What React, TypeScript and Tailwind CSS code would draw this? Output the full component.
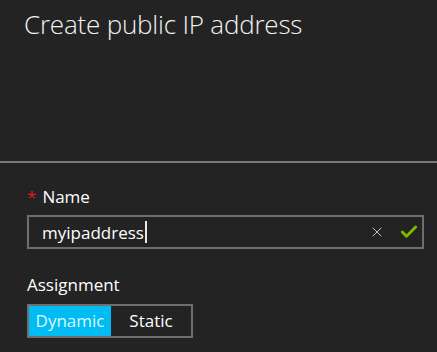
import { X, Check } from "lucide-react";

export default function App() {
  return (
    <main
      className="h-[352px] w-[437px] overflow-hidden bg-[#232323] text-white"
      style={{ fontFamily: '"Open Sans", "Noto Sans", sans-serif' }}
    >
      <header className="h-[163px] border-b-2 border-[#787878] px-6 pt-[6px]">
        <h1 className="text-[26px] font-light leading-9 tracking-[-0.2px] text-[#f2f2f2]">
          Create public IP address
        </h1>
      </header>

      <section className="px-[27px] pt-[22px]">
        <label className="flex items-center gap-[6px] text-[17px] leading-6">
          <span className="text-[#e81123]">*</span>
          <span>Name</span>
        </label>

        <div className="mt-[6px] flex h-[34px] w-[397px] items-center border-2 border-[#6e6e6e] pl-[13px] pr-[3px]">
          <span className="text-[17px] leading-none text-white">myipaddress</span>
          <span className="ml-[1px] h-[22px] w-[2px] bg-[#e6e6e6]" />
          <span className="flex-1" />
          <X className="size-[16px] text-[#cfcfcf]" strokeWidth={1.4} />
          <Check className="ml-[14px] size-[20px] text-[#7fba00]" strokeWidth={3.5} />
        </div>

        <p className="mt-[24px] text-[17px] leading-6">Assignment</p>

        <div className="mt-[7px] flex h-[34px] w-[166px] border-2 border-[#6e6e6e]">
          <button className="flex w-[82px] items-center justify-center bg-[#00bcf2] text-[17px] text-[#dff6ff]">
            Dynamic
          </button>
          <button className="flex flex-1 items-center justify-center text-[17px] text-white">
            Static
          </button>
        </div>
      </section>
    </main>
  );
}
